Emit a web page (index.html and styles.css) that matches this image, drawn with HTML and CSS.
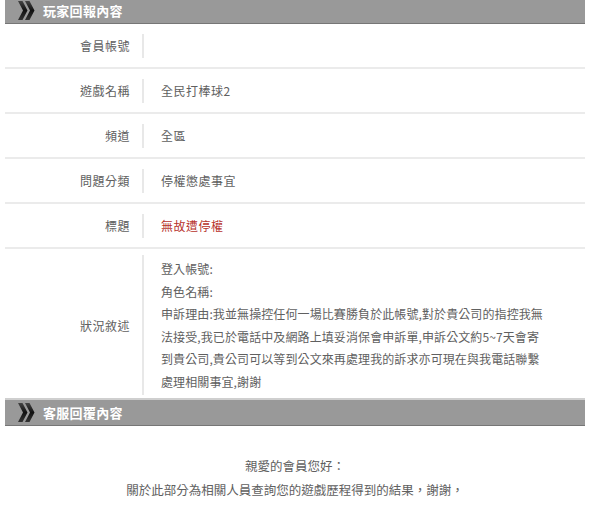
FILE: index.html
```html
<!DOCTYPE html>
<html lang="zh-Hant">
<head>
<meta charset="utf-8">
<title>玩家回報內容</title>
<link rel="stylesheet" href="styles.css">
</head>
<body>
<div class="page">
  <div class="section-head">
    <svg class="chev" width="17" height="19" viewBox="0 0 17 19" aria-hidden="true">
      <defs>
        <linearGradient id="g1" x1="0" y1="0" x2="0" y2="1">
          <stop offset="0" stop-color="#444"/>
          <stop offset="0.5" stop-color="#111"/>
          <stop offset="1" stop-color="#333"/>
        </linearGradient>
      </defs>
      <polygon points="0,0 4.5,0 9.5,9.5 4.5,19 0,19 5,9.5" fill="url(#g1)"/>
      <polygon points="7,0 11.5,0 16.5,9.5 11.5,19 7,19 12,9.5" fill="url(#g1)"/>
    </svg>
    <span class="head-title">玩家回報內容</span>
  </div>

  <div class="row">
    <div class="label">會員帳號</div>
    <div class="value"></div>
  </div>
  <div class="row">
    <div class="label">遊戲名稱</div>
    <div class="value">全民打棒球2</div>
  </div>
  <div class="row">
    <div class="label">頻道</div>
    <div class="value">全區</div>
  </div>
  <div class="row">
    <div class="label">問題分類</div>
    <div class="value">停權懲處事宜</div>
  </div>
  <div class="row">
    <div class="label">標題</div>
    <div class="value red">無故遭停權</div>
  </div>
  <div class="row row-tall">
    <div class="label">狀況敘述</div>
    <div class="value multi">登入帳號:<br>角色名稱:<br>申訴理由:我並無操控任何一場比賽勝負於此帳號,對於貴公司的指控我無<br>法接受,我已於電話中及網路上填妥消保會申訴單,申訴公文約5~7天會寄<br>到貴公司,貴公司可以等到公文來再處理我的訴求亦可現在與我電話聯繫<br>處理相關事宜,謝謝</div>
  </div>

  <div class="section-head">
    <svg class="chev" width="17" height="19" viewBox="0 0 17 19" aria-hidden="true">
      <defs>
        <linearGradient id="g2" x1="0" y1="0" x2="0" y2="1">
          <stop offset="0" stop-color="#444"/>
          <stop offset="0.5" stop-color="#111"/>
          <stop offset="1" stop-color="#333"/>
        </linearGradient>
      </defs>
      <polygon points="0,0 4.5,0 9.5,9.5 4.5,19 0,19 5,9.5" fill="url(#g2)"/>
      <polygon points="7,0 11.5,0 16.5,9.5 11.5,19 7,19 12,9.5" fill="url(#g2)"/>
    </svg>
    <span class="head-title">客服回覆內容</span>
  </div>

  <div class="reply">
    <p>親愛的會員您好：</p>
    <p>關於此部分為相關人員查詢您的遊戲歷程得到的結果，謝謝，</p>
  </div>
</div>
</body>
</html>
```

FILE: styles.css
```css
html, body {
  margin: 0;
  padding: 0;
  background: #fff;
}

body {
  font-family: "Noto Sans CJK TC", "Noto Sans", sans-serif;
  font-size: 12px;
  color: #606060;
}

.page {
  width: 580px;
  margin: -2px 0 0 5px;
}

.section-head {
  display: flex;
  align-items: center;
  gap: 8px;
  height: 25px;
  padding-left: 13px;
  background: #999;
  border-bottom: 1px solid #767676;
}

.chev {
  display: block;
  flex: none;
}

.head-title {
  color: #fff;
  font-size: 13px;
  font-weight: bold;
  letter-spacing: 0.3px;
}

.row {
  display: flex;
  align-items: center;
  height: 43px;
  border-bottom: 2px solid #ebebeb;
}

.label {
  width: 125px;
  padding-right: 12px;
  text-align: right;
  letter-spacing: 0.5px;
  flex: none;
}

.value {
  border-left: 2px solid #e8e8e8;
  padding-left: 17px;
  min-height: 24px;
  line-height: 24px;
  flex: 1;
  letter-spacing: 0.5px;
}

.red {
  color: #b7332c;
}

.row-tall {
  height: auto;
  padding: 6px 0 3px;
  border-bottom: 2px solid #cfcfcf;
  align-items: stretch;
}

.row-tall .label {
  align-self: center;
}

.value.multi {
  line-height: 22.5px;
  padding-top: 3px;
  padding-bottom: 2px;
  letter-spacing: 0.1px;
}

.reply {
  padding-top: 28px;
  text-align: center;
  font-size: 12.5px;
}

.reply p {
  margin: 0;
  line-height: 24px;
}
```
